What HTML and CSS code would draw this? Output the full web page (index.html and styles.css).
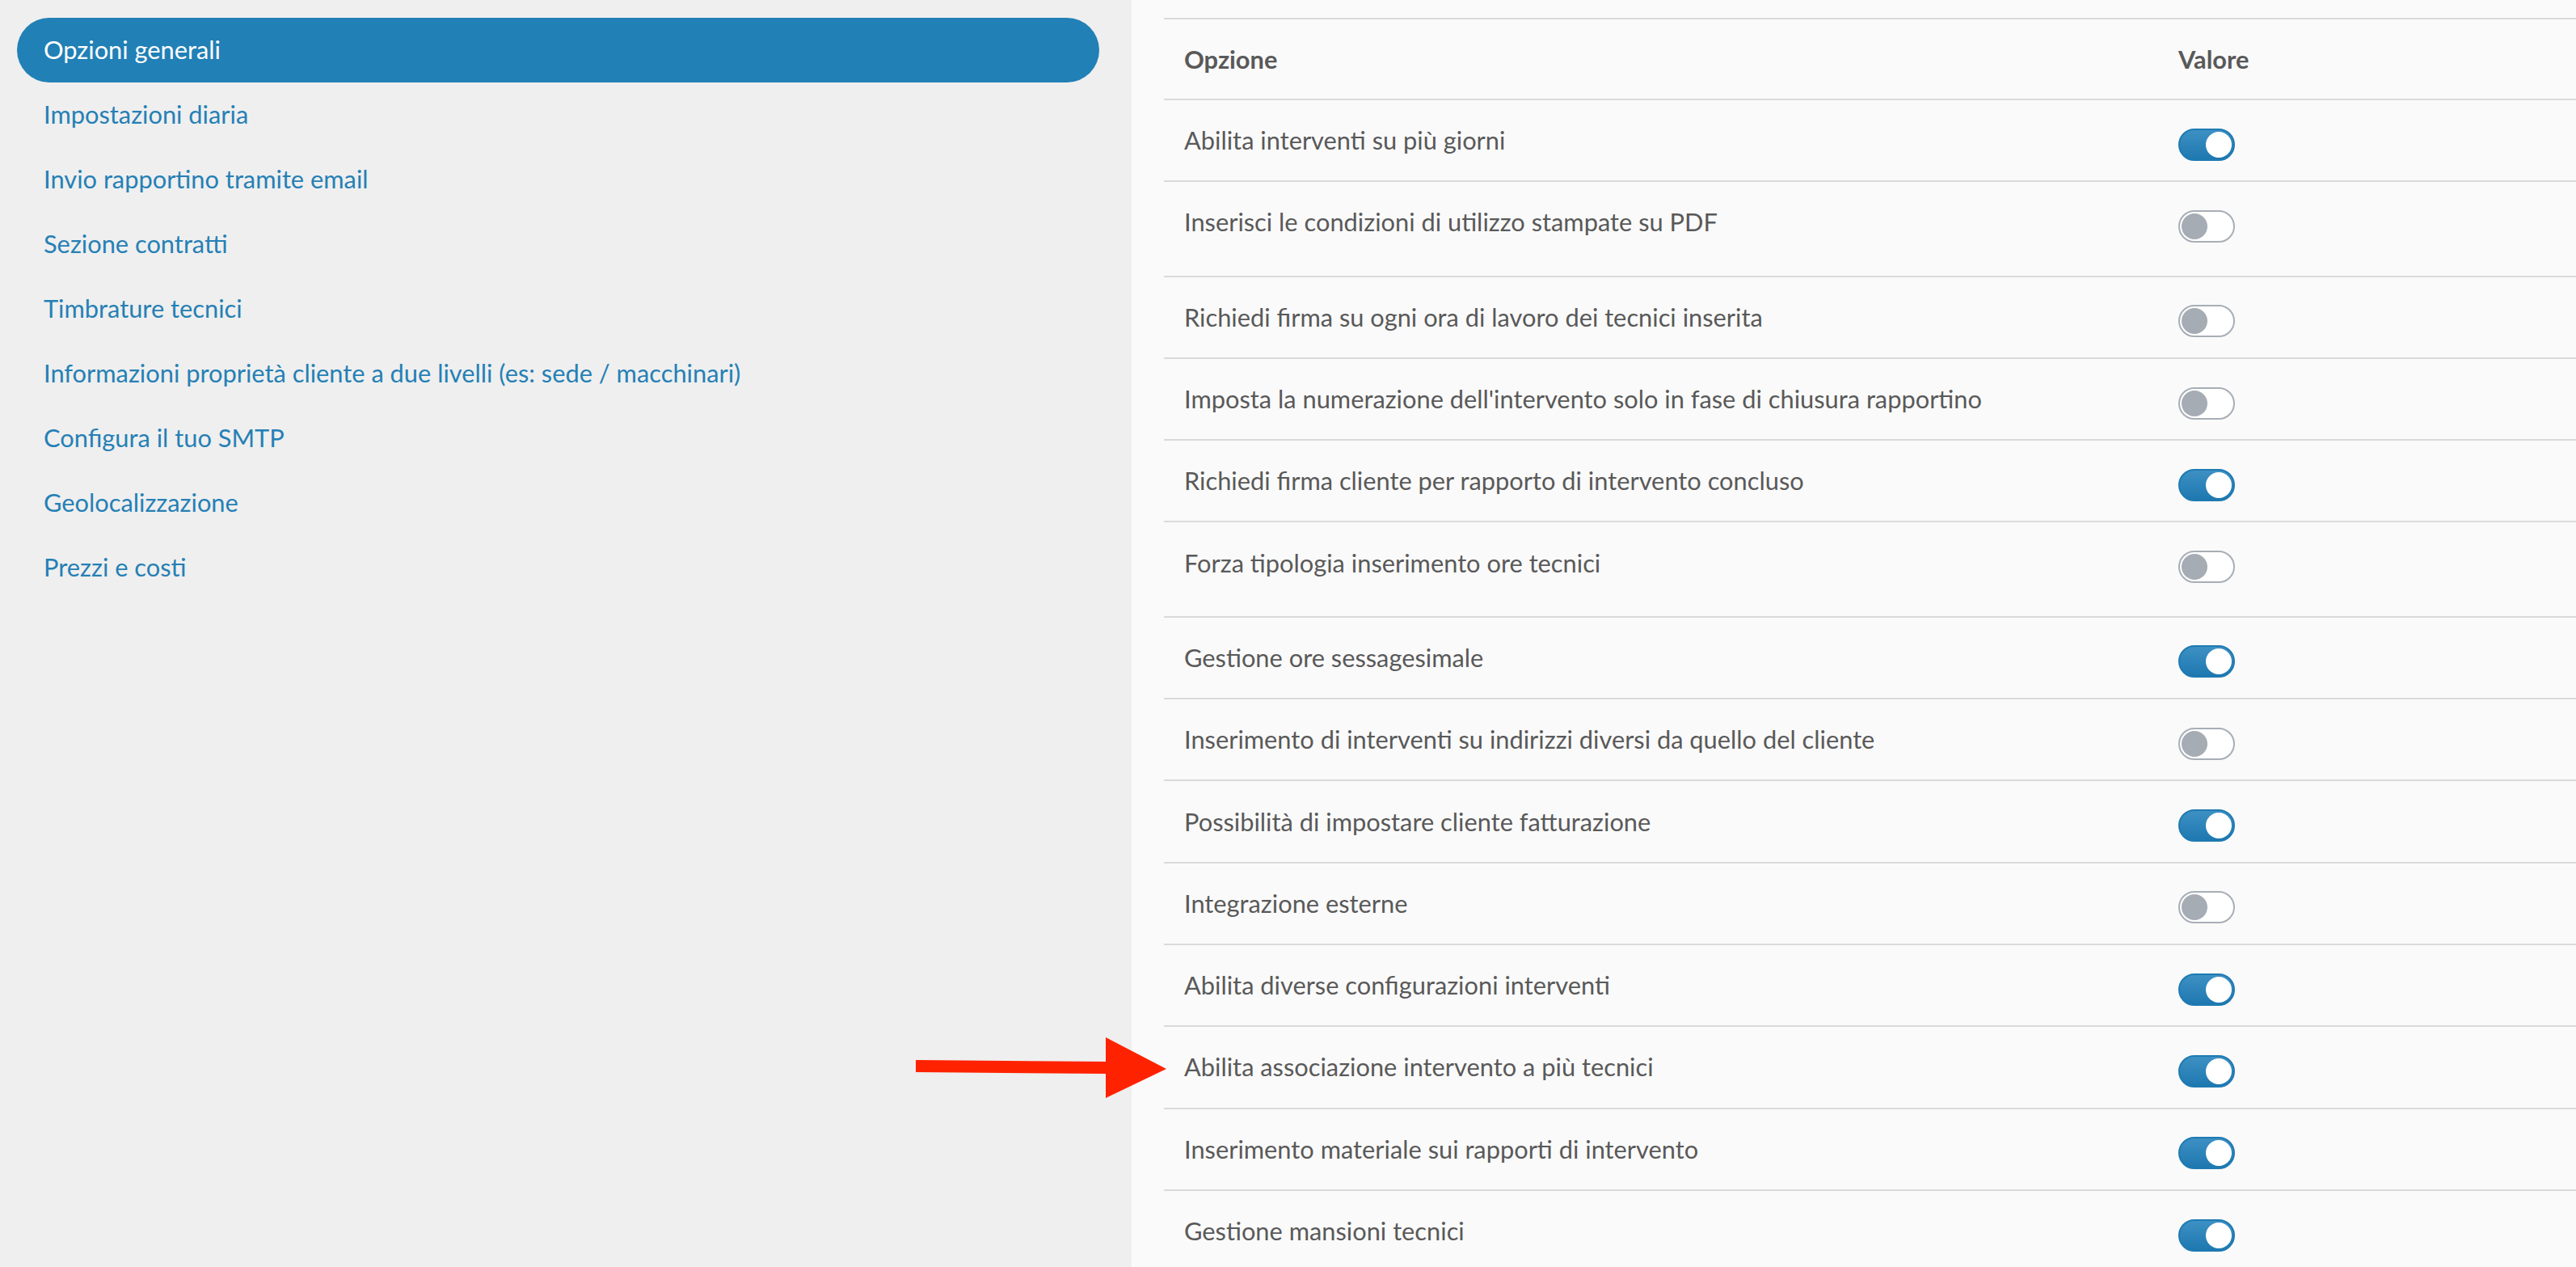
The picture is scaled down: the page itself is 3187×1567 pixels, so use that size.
FILE: index.html
```html
<!DOCTYPE html>
<html lang="it">

<head>
  <meta charset="UTF-8">
  <meta name="viewport" content="width=device-width, initial-scale=1.0">
  <title>Opzioni generali</title>
  <link rel="stylesheet" href="styles.css">
</head>

<body>
  <div class="page">
    <aside class="sidebar">
      <a href="#" class="side-link active">Opzioni generali</a>
      <a href="#" class="side-link">Impostazioni diaria</a>
      <a href="#" class="side-link">Invio rapportino tramite email</a>
      <a href="#" class="side-link">Sezione contratti</a>
      <a href="#" class="side-link">Timbrature tecnici</a>
      <a href="#" class="side-link">Informazioni proprietà cliente a due livelli (es: sede / macchinari)</a>
      <a href="#" class="side-link">Configura il tuo SMTP</a>
      <a href="#" class="side-link">Geolocalizzazione</a>
      <a href="#" class="side-link">Prezzi e costi</a>
    </aside>

    <main class="content">
      <div class="options">
        <div class="opt-row head">
          <div class="opt-name">Opzione</div>
          <div class="opt-value">Valore</div>
        </div>
        <div class="opt-row">
          <div class="opt-name">Abilita interventi su più giorni</div>
          <div class="opt-value"><span class="toggle on"><span class="knob"></span></span></div>
        </div>
        <div class="opt-row tall">
          <div class="opt-name">Inserisci le condizioni di utilizzo stampate su PDF</div>
          <div class="opt-value"><span class="toggle"><span class="knob"></span></span></div>
        </div>
        <div class="opt-row">
          <div class="opt-name">Richiedi firma su ogni ora di lavoro dei tecnici inserita</div>
          <div class="opt-value"><span class="toggle"><span class="knob"></span></span></div>
        </div>
        <div class="opt-row">
          <div class="opt-name">Imposta la numerazione dell'intervento solo in fase di chiusura rapportino</div>
          <div class="opt-value"><span class="toggle"><span class="knob"></span></span></div>
        </div>
        <div class="opt-row">
          <div class="opt-name">Richiedi firma cliente per rapporto di intervento concluso</div>
          <div class="opt-value"><span class="toggle on"><span class="knob"></span></span></div>
        </div>
        <div class="opt-row tall">
          <div class="opt-name">Forza tipologia inserimento ore tecnici</div>
          <div class="opt-value"><span class="toggle"><span class="knob"></span></span></div>
        </div>
        <div class="opt-row">
          <div class="opt-name">Gestione ore sessagesimale</div>
          <div class="opt-value"><span class="toggle on"><span class="knob"></span></span></div>
        </div>
        <div class="opt-row">
          <div class="opt-name">Inserimento di interventi su indirizzi diversi da quello del cliente</div>
          <div class="opt-value"><span class="toggle"><span class="knob"></span></span></div>
        </div>
        <div class="opt-row">
          <div class="opt-name">Possibilità di impostare cliente fatturazione</div>
          <div class="opt-value"><span class="toggle on"><span class="knob"></span></span></div>
        </div>
        <div class="opt-row">
          <div class="opt-name">Integrazione esterne</div>
          <div class="opt-value"><span class="toggle"><span class="knob"></span></span></div>
        </div>
        <div class="opt-row">
          <div class="opt-name">Abilita diverse configurazioni interventi</div>
          <div class="opt-value"><span class="toggle on"><span class="knob"></span></span></div>
        </div>
        <div class="opt-row">
          <div class="opt-name">Abilita associazione intervento a più tecnici</div>
          <div class="opt-value"><span class="toggle on"><span class="knob"></span></span></div>
        </div>
        <div class="opt-row">
          <div class="opt-name">Inserimento materiale sui rapporti di intervento</div>
          <div class="opt-value"><span class="toggle on"><span class="knob"></span></span></div>
        </div>
        <div class="opt-row">
          <div class="opt-name">Gestione mansioni tecnici</div>
          <div class="opt-value"><span class="toggle on"><span class="knob"></span></span></div>
        </div>
      </div>
    </main>
  </div>

  <!-- freccia rossa sopra la pagina -->
  <svg class="arrow" width="315" height="80" viewBox="0 0 315 80">
    <polygon points="3,31 240,33 240,48 3,46" fill="#ff2200" />
    <polygon points="238,3 313,42 238,78" fill="#ff2200" />
  </svg>
</body>

</html>
```

FILE: styles.css
```css
body {
  margin: 0;
  font-family: Lato, "Open Sans", sans-serif;
  background-color: #fafafa;
}

.page {
  display: flex;
  min-height: 100vh;
}

/* menu laterale */
.sidebar {
  width: 1400px;
  flex-shrink: 0;
  box-sizing: border-box;
  padding: 22px 40px 0 21px;
  background-color: #efefef;
  display: flex;
  flex-direction: column;
}

.side-link {
  display: block;
  height: 80px;
  line-height: 80px;
  padding-left: 33px;
  border-radius: 40px;
  font-size: 30.8px;
  color: #2580b5;
  text-decoration: none;
}

.side-link.active {
  background-color: #2180b6;
  color: #fff;
}

/* tabella opzioni */
.content {
  flex: 1;
  padding: 22px 0 0 40px;
  overflow: hidden;
}

.opt-row {
  display: flex;
  align-items: center;
  min-height: 99.3px;
  border-top: 2px solid #dadada;
  font-size: 30.8px;
  color: #595959;
}

.opt-row.head {
  min-height: 98px;
  font-weight: 700;
}

.opt-row.tall {
  padding-bottom: 16px;
}

.opt-name {
  width: 1230px;
  flex-shrink: 0;
  box-sizing: border-box;
  padding-left: 25px;
}

.opt-value {
  flex: 1;
  padding-left: 25px;
}

.toggle {
  display: block;
  width: 70px;
  height: 40px;
  margin-top: 10px;
  box-sizing: border-box;
  padding: 2px;
  border: 2px solid #a7aeb6;
  border-radius: 20px;
  background-color: #fff;
}

.knob {
  display: block;
  width: 32px;
  height: 32px;
  border-radius: 50%;
  background-color: #a6acb4;
}

.toggle.on {
  border-color: #1f7ab2;
  background: linear-gradient(#3d90c3, #1e78b0);
}

.toggle.on .knob {
  margin-left: 30px;
  background-color: #fff;
}

.arrow {
  position: absolute;
  left: 1130px;
  top: 1280px;
}
```
